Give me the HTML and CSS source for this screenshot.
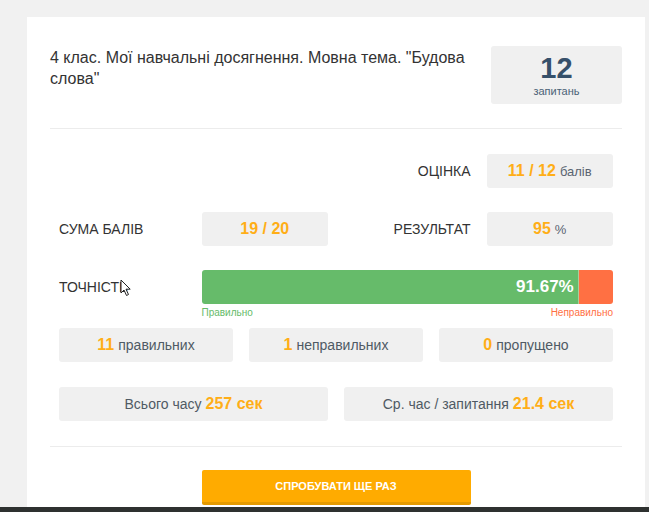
FILE: index.html
```html
<!DOCTYPE html>
<html lang="uk">
<head>
<meta charset="utf-8">
<title>Результат</title>
<link rel="stylesheet" href="styles.css">
</head>
<body>
<div class="card">
  <div class="header">
    <div class="title">4 клас. Мої навчальні досягнення. Мовна тема. "Будова слова"</div>
    <div class="qbox">
      <div class="qnum">12</div>
      <div class="qlabel">запитань</div>
    </div>
  </div>
  <div class="sep"></div>
  <div class="stats">
    <div class="grid">
      <div class="label right c3">ОЦІНКА</div>
      <div class="box c4"><span class="num">11 / 12</span> <span class="unit">балів</span></div>

      <div class="label">СУМА БАЛІВ</div>
      <div class="box"><span class="num">19 / 20</span></div>
      <div class="label right">РЕЗУЛЬТАТ</div>
      <div class="box"><span class="num">95</span> <span class="unit">%</span></div>

      <div class="label acc">ТОЧНІСТЬ
        <svg class="cursor" width="12" height="18" viewBox="0 0 12 18"><path d="M1 1 L1 14 L4 11 L6.5 16.5 L8.5 15.5 L6 10.2 L10.2 10.2 Z" fill="#fff" stroke="#222" stroke-width="1" stroke-linejoin="round"/></svg>
      </div>
      <div class="barcell">
        <div class="bar">
          <div class="good" style="width:91.67%"><span>91.67%</span></div>
          <div class="bad"></div>
        </div>
        <div class="barlabels"><span class="lg">Правильно</span><span class="lb">Неправильно</span></div>
      </div>
    </div>
    <div class="three">
      <div class="box"><span class="num">11</span> <span class="txt">правильних</span></div>
      <div class="box"><span class="num">1</span> <span class="txt">неправильних</span></div>
      <div class="box"><span class="num">0</span> <span class="txt">пропущено</span></div>
    </div>
    <div class="two">
      <div class="box"><span class="txt">Всього часу</span> <span class="num">257 сек</span></div>
      <div class="box"><span class="txt">Ср. час / запитання</span> <span class="num">21.4 сек</span></div>
    </div>
  </div>
  <div class="sep sep2"></div>
  <div class="actions">
    <button class="btn">СПРОБУВАТИ ЩЕ РАЗ</button>
  </div>
</div>
<div class="taskbar"></div>
</body>
</html>
```

FILE: styles.css
```css
* { box-sizing: border-box; }
html, body { margin: 0; padding: 0; }
body {
  background: #f1f1f1;
  font-family: "Liberation Sans", Arial, sans-serif;
  color: #333;
  height: 512px;
  overflow: hidden;
}
.card {
  margin: 17px 0 0 27px;
  width: 618px;
  height: 495px;
  background: #fff;
  padding: 0 23px;
}
.header {
  display: flex;
  align-items: flex-start;
  gap: 16px;
  padding: 29px 0 24px;
}
.title {
  flex: 1;
  font-size: 16px;
  line-height: 21px;
  color: #333;
  padding-top: 1px;
  padding-right: 8px;
}
.qbox {
  width: 131px;
  height: 58px;
  background: #f0f0f0;
  border-radius: 3px;
  display: flex;
  flex-direction: column;
  align-items: center;
  justify-content: center;
}
.qnum {
  font-size: 29px;
  font-weight: bold;
  color: #36506a;
  line-height: 30px;
}
.qlabel {
  font-size: 11px;
  color: #4b6276;
  line-height: 14px;
  margin-top: 1px;
}
.sep {
  border-top: 1px solid #ececec;
}
.stats {
  padding: 25px 9px 0;
}
.grid {
  display: grid;
  grid-template-columns: repeat(4, 1fr);
  column-gap: 16px;
  row-gap: 24px;
}
.c3 { grid-column: 3; }
.c4 { grid-column: 4; }
.label {
  font-size: 14px;
  color: #333;
  height: 34px;
  display: flex;
  align-items: center;
}
.label.right { justify-content: flex-end; }
.acc { position: relative; align-self: start; }
.cursor {
  position: absolute;
  left: 61px;
  top: 9px;
}
.box {
  height: 34px;
  background: #f0f0f0;
  border-radius: 3px;
  display: flex;
  align-items: center;
  justify-content: center;
  gap: 4px;
}
.num {
  font-size: 16px;
  font-weight: bold;
  color: #ffae17;
}
.unit {
  font-size: 13px;
  color: #5a6470;
}
.txt {
  font-size: 14px;
  color: #4f5a64;
}
.barcell {
  grid-column: 2 / 5;
}
.bar {
  display: flex;
  height: 34px;
  border-radius: 3px;
  overflow: hidden;
}
.good {
  background: #66bb6a;
  display: flex;
  align-items: center;
  justify-content: flex-end;
  padding-right: 4px;
  border-right: 1px solid #a9cf9a;
}
.good span {
  color: #fff;
  font-weight: bold;
  font-size: 17px;
}
.bad {
  flex: 1;
  background: #ff7043;
}
.barlabels {
  display: flex;
  justify-content: space-between;
  font-size: 10px;
  line-height: 14px;
  margin-top: 2px;
}
.lg { color: #66bb6a; }
.lb { color: #ff7043; }
.three {
  display: grid;
  grid-template-columns: repeat(3, 1fr);
  gap: 16px;
  margin-top: 8px;
}
.two {
  display: grid;
  grid-template-columns: repeat(2, 1fr);
  gap: 16px;
  margin-top: 25px;
}
.sep2 {
  margin-top: 25px;
}
.actions {
  display: flex;
  justify-content: center;
  padding-top: 23px;
}
.btn {
  width: 269px;
  height: 35px;
  background: #ffab00;
  border: none;
  border-bottom: 3px solid #e59a00;
  border-radius: 2px;
  color: #fff;
  font-family: "Liberation Sans", Arial, sans-serif;
  font-weight: bold;
  font-size: 11px;
  padding: 0;
}
.taskbar {
  position: fixed;
  left: 0;
  right: 0;
  bottom: 0;
  height: 5px;
  background: #2e3130;
}
```
